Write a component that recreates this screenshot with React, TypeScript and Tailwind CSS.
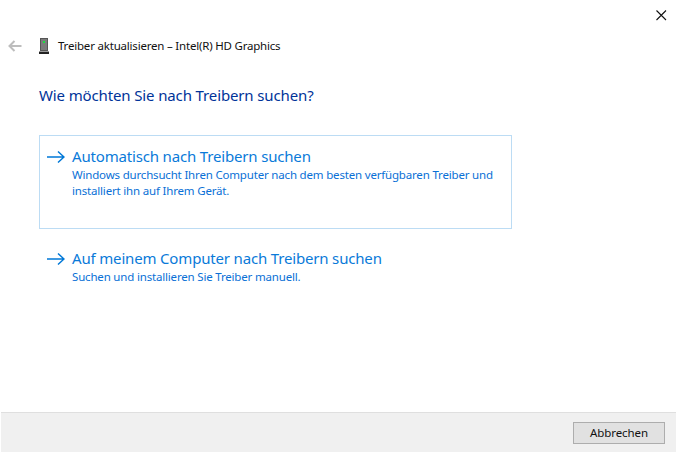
export default function App() {
  return (
    <div className="relative flex h-[454px] w-[677px] flex-col overflow-hidden bg-white font-['Noto_Sans',sans-serif]">
      <button className="absolute right-[10px] top-[9px] h-3 w-3 text-[#111]" aria-label="Schließen">
        <svg viewBox="0 0 12 12" className="h-3 w-3" fill="none" stroke="currentColor" strokeWidth="1.1">
          <path d="M1.5 1.5l9.5 9.5M11 1.5L1.5 11" />
        </svg>
      </button>
      <div className="flex flex-1 flex-col pl-[8px]">
        <div className="mt-[37px] flex h-[18px] items-center">
          <svg viewBox="0 0 14 12" className="h-3 w-[14px]" fill="none" stroke="#bdbdbd" strokeWidth="2">
            <path d="M13.5 6H1.5M6.5 1L1.5 6l5 5" />
          </svg>
          <svg viewBox="0 0 10 16" className="ml-[17px] h-4 w-[10px]">
            <rect x="1" y="0" width="8" height="13" fill="#555" />
            <rect x="2" y="1" width="6" height="11" fill="#7b7b7b" />
            <rect x="4" y="3" width="2" height="2" fill="#18e040" />
            <rect x="0" y="13" width="10" height="1" fill="#999" />
            <rect x="0" y="14" width="10" height="2" fill="#222" />
          </svg>
          <span className="ml-[9px] whitespace-nowrap text-[11.5px] leading-[18px] tracking-[-0.2px] text-[#111]">Treiber aktualisieren – Intel(R) HD Graphics</span>
        </div>
        <h1 className="ml-[31px] mt-[28px] text-[15px] font-normal leading-[24px] tracking-[-0.13px] text-[#003399]">Wie möchten Sie nach Treibern suchen?</h1>
        <div className="ml-[31px] mt-[28px] h-[94px] w-[473px] border border-[#bcdcf4] pl-[7px] pt-[10px] text-[#0066cc]">
          <Option title="Automatisch nach Treibern suchen" lines={["Windows durchsucht Ihren Computer nach dem besten verfügbaren Treiber und", "installiert ihn auf Ihrem Gerät."]} />
        </div>
        <div className="ml-[32px] mt-[19px] pl-[7px]">
          <Option title="Auf meinem Computer nach Treibern suchen" lines={["Suchen und installieren Sie Treiber manuell."]} />
        </div>
      </div>
      <div className="mb-[2px] ml-[1px] mr-[1px] flex h-[40px] items-center justify-end border-t border-[#dfdfdf] bg-[#f0f0f0] pr-[11px]">
        <button className="h-[22px] w-[92px] border border-[#adadad] bg-[#e1e1e1] text-[11.5px] leading-[20px] tracking-[-0.1px] text-[#111]">Abbrechen</button>
      </div>
    </div>
  );
}

function Option({ title, lines }: { title: string; lines: string[] }) {
  return (
    <div className="flex items-start">
      <svg viewBox="0 0 18 14" className="mt-[4px] h-[14px] w-[18px]" fill="none" stroke="#0078d7" strokeWidth="1.5">
        <path d="M0 7h17M11 1.5L17 7l-6 5.5" />
      </svg>
      <div className="ml-[7px] flex flex-col">
        <div className="whitespace-nowrap text-[15px] leading-[20px] tracking-[-0.17px] text-[#0a7ad9]">{title}</div>
        <div className="mt-[1px] flex flex-col">
          {lines.map((l) => (
            <div key={l} className="whitespace-nowrap text-[11.5px] leading-[16px] tracking-[-0.18px] text-[#0a70d6]">{l}</div>
          ))}
        </div>
      </div>
    </div>
  );
}
